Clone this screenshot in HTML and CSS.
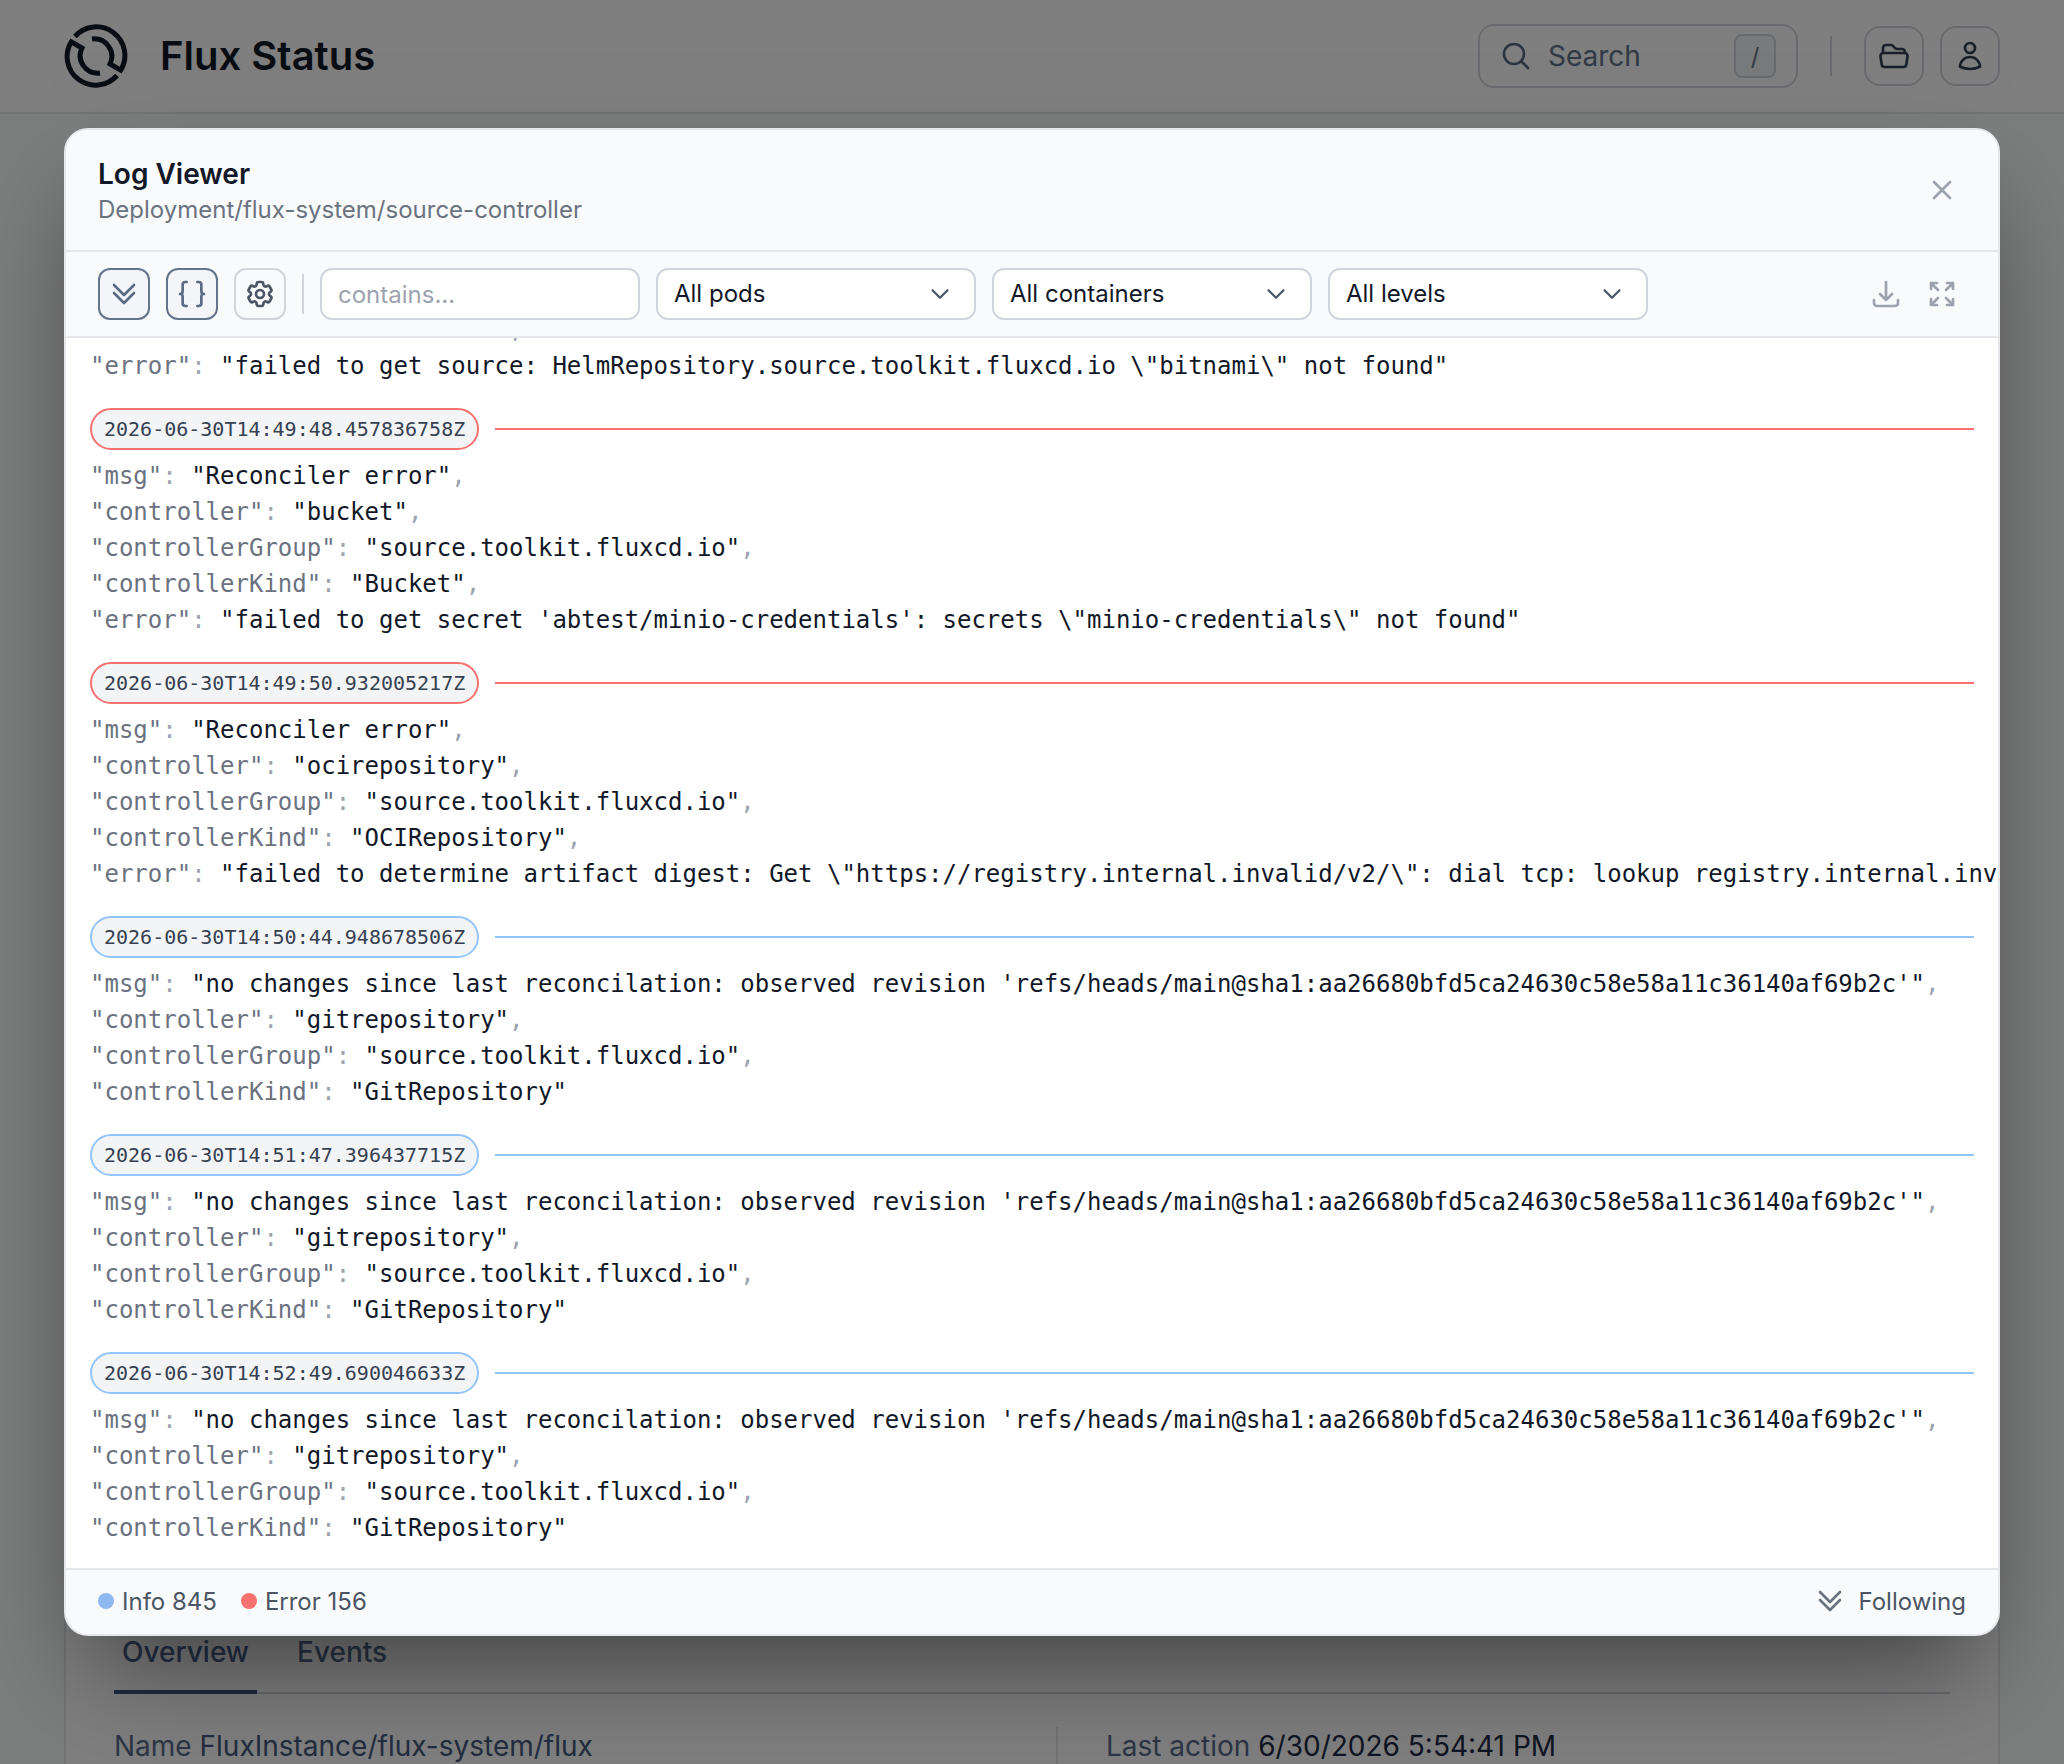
FILE: index.html
```html
<!DOCTYPE html>
<html lang="en">
<head>
<meta charset="utf-8">
<title>Flux Status</title>
<link rel="stylesheet" href="styles.css">
</head>
<body>
<header class="topbar">
  <div class="brand">
    <svg class="logo" viewBox="0 0 64 64" fill="none" stroke="currentColor" stroke-width="5" stroke-linecap="butt" stroke-linejoin="miter">
      <path d="M11 12.5A28.5 28.5 0 0 1 56.7 46.2L46 40A17.5 17.5 0 0 0 28 15"/>
      <path d="M53 51.5A28.5 28.5 0 0 1 7.3 17.8L18 24A17.5 17.5 0 0 0 36 49"/>
    </svg>
    <span class="brand-name">Flux Status</span>
  </div>
  <div class="top-actions">
    <div class="search">
      <svg class="icon32 bold" viewBox="0 0 24 24" fill="none" stroke="currentColor" stroke-width="1.5" stroke-linecap="round" stroke-linejoin="round"><path d="m21 21-5.197-5.197m0 0A7.5 7.5 0 1 0 5.196 5.196a7.5 7.5 0 0 0 10.607 10.607Z"/></svg>
      <span class="search-label">Search</span>
      <kbd class="kbd">/</kbd>
    </div>
    <span class="top-sep"></span>
    <button class="top-btn"><svg class="icon32 bold" viewBox="0 0 24 24" fill="none" stroke="currentColor" stroke-width="1.5" stroke-linecap="round" stroke-linejoin="round"><path d="M3.75 9.776c.112-.017.227-.026.344-.026h15.812c.117 0 .232.009.344.026m-16.5 0a2.25 2.25 0 0 0-1.883 2.542l.857 6a2.25 2.25 0 0 0 2.227 1.932H19.05a2.25 2.25 0 0 0 2.227-1.932l.857-6a2.25 2.25 0 0 0-1.883-2.542m-16.5 0V6A2.25 2.25 0 0 1 6 3.75h3.879a1.5 1.5 0 0 1 1.06.44l2.122 2.12a1.5 1.5 0 0 0 1.06.44H18A2.25 2.25 0 0 1 20.25 9v.776"/></svg></button>
    <button class="top-btn"><svg class="icon32 bold" viewBox="0 0 24 24" fill="none" stroke="currentColor" stroke-width="1.5" stroke-linecap="round" stroke-linejoin="round"><path d="M15.75 6a3.75 3.75 0 1 1-7.5 0 3.75 3.75 0 0 1 7.5 0ZM4.501 20.118a7.5 7.5 0 0 1 14.998 0A17.933 17.933 0 0 1 12 21.75c-2.676 0-5.216-.584-7.499-1.632Z"/></svg></button>
  </div>
</header>

<main class="page">
  <section class="card">
    <div class="card-spacer"></div>
    <nav class="tabs">
      <span class="tab tab-active">Overview</span>
      <span class="tab">Events</span>
    </nav>
    <div class="facts">
      <div class="fact"><span class="fact-key">Name</span> FluxInstance/flux-system/flux</div>
      <div class="fact fact-right"><span class="fact-key">Last action</span> <span class="fact-strong">6/30/2026 5:54:41 PM</span></div>
    </div>
  </section>
</main>

<div class="overlay">
  <div class="modal">
    <div class="modal-head">
      <div>
        <div class="modal-title">Log Viewer</div>
        <div class="modal-sub">Deployment/flux-system/source-controller</div>
      </div>
      <svg class="icon32 muted bold" viewBox="0 0 24 24" fill="none" stroke="currentColor" stroke-width="1.5" stroke-linecap="round" stroke-linejoin="round"><path d="M6 18 18 6M6 6l12 12"/></svg>
    </div>

    <div class="toolbar">
      <button class="tool tool-on"><svg class="icon32 bold" viewBox="0 0 24 24" fill="none" stroke="currentColor" stroke-width="1.5" stroke-linecap="round" stroke-linejoin="round"><path d="m4.5 5.25 7.5 7.5 7.5-7.5m-15 6 7.5 7.5 7.5-7.5"/></svg></button>
      <button class="tool tool-on"><svg class="icon32 bold" viewBox="0 0 24 24" fill="none" stroke="currentColor" stroke-width="1.5" stroke-linecap="round" stroke-linejoin="round"><path d="M8 3H7a2 2 0 0 0-2 2v5a2 2 0 0 1-2 2 2 2 0 0 1 2 2v5c0 1.1.9 2 2 2h1"/><path d="M16 21h1a2 2 0 0 0 2-2v-5c0-1.1.9-2 2-2a2 2 0 0 1-2-2V5a2 2 0 0 0-2-2h-1"/></svg></button>
      <button class="tool"><svg class="icon32 bold" viewBox="0 0 24 24" fill="none" stroke="currentColor" stroke-width="1.5" stroke-linecap="round" stroke-linejoin="round"><path d="M9.594 3.94c.09-.542.56-.94 1.11-.94h2.593c.55 0 1.02.398 1.11.94l.213 1.281c.063.374.313.686.645.87.074.04.147.083.22.127.325.196.72.257 1.075.124l1.217-.456a1.125 1.125 0 0 1 1.37.49l1.296 2.247a1.125 1.125 0 0 1-.26 1.431l-1.003.827c-.293.241-.438.613-.43.992a7.723 7.723 0 0 1 0 .255c-.008.378.137.75.43.991l1.004.827c.424.35.534.955.26 1.43l-1.298 2.247a1.125 1.125 0 0 1-1.369.491l-1.217-.456c-.355-.133-.75-.072-1.076.124a6.47 6.47 0 0 1-.22.128c-.331.183-.581.495-.644.869l-.213 1.281c-.09.543-.56.94-1.11.94h-2.594c-.55 0-1.019-.398-1.11-.94l-.213-1.281c-.062-.374-.312-.686-.644-.87a6.52 6.52 0 0 1-.22-.127c-.325-.196-.72-.257-1.076-.124l-1.217.456a1.125 1.125 0 0 1-1.369-.49l-1.297-2.247a1.125 1.125 0 0 1 .26-1.431l1.004-.827c.292-.24.437-.613.43-.991a6.932 6.932 0 0 1 0-.255c.007-.38-.138-.751-.43-.992l-1.004-.827a1.125 1.125 0 0 1-.26-1.43l1.297-2.247a1.125 1.125 0 0 1 1.37-.491l1.216.456c.356.133.751.072 1.076-.124.072-.044.146-.086.22-.128.332-.183.582-.495.644-.869l.214-1.28Z"/><path d="M15 12a3 3 0 1 1-6 0 3 3 0 0 1 6 0Z"/></svg></button>
      <span class="tool-sep"></span>
      <input class="field filter" type="text" placeholder="contains...">
      <div class="field select"><span class="select-text">All pods</span><svg class="icon24" viewBox="0 0 24 24" fill="none" stroke="currentColor" stroke-width="2.2" stroke-linecap="round" stroke-linejoin="round"><path d="m19.5 8.25-7.5 7.5-7.5-7.5"/></svg></div>
      <div class="field select"><span class="select-text">All containers</span><svg class="icon24" viewBox="0 0 24 24" fill="none" stroke="currentColor" stroke-width="2.2" stroke-linecap="round" stroke-linejoin="round"><path d="m19.5 8.25-7.5 7.5-7.5-7.5"/></svg></div>
      <div class="field select"><span class="select-text">All levels</span><svg class="icon24" viewBox="0 0 24 24" fill="none" stroke="currentColor" stroke-width="2.2" stroke-linecap="round" stroke-linejoin="round"><path d="m19.5 8.25-7.5 7.5-7.5-7.5"/></svg></div>
      <div class="tool-right">
        <svg class="icon32 muted bold" viewBox="0 0 24 24" fill="none" stroke="currentColor" stroke-width="1.5" stroke-linecap="round" stroke-linejoin="round"><path d="M3 16.5v2.25A2.25 2.25 0 0 0 5.25 21h13.5A2.25 2.25 0 0 0 21 18.75V16.5M16.5 12 12 16.5m0 0L7.5 12m4.5 4.5V3"/></svg>
        <svg class="icon32 muted bold" viewBox="0 0 24 24" fill="none" stroke="currentColor" stroke-width="1.5" stroke-linecap="round" stroke-linejoin="round"><path d="M3.75 3.75v4.5m0-4.5h4.5m-4.5 0L9 9M3.75 20.25v-4.5m0 4.5h4.5m-4.5 0L9 15M20.25 3.75h-4.5m4.5 0v4.5m0-4.5L15 9m5.25 11.25h-4.5m4.5 0v-4.5m0 4.5L15 15"/></svg>
      </div>
    </div>

    <div class="logs">
      <div class="entry">
        <div class="line"><span class="k">"controllerKind"</span><span class="p">: </span><span class="v">"HelmChart"</span><span class="p">,</span></div>
        <div class="line"><span class="k">"error"</span><span class="p">: </span><span class="v">"failed to get source: HelmRepository.source.toolkit.fluxcd.io \"bitnami\" not found"</span></div>
      </div>

      <div class="entry">
        <div class="stamp-row stamp-error"><span class="stamp">2026-06-30T14:49:48.457836758Z</span><span class="rule"></span></div>
        <div class="line"><span class="k">"msg"</span><span class="p">: </span><span class="v">"Reconciler error"</span><span class="p">,</span></div>
        <div class="line"><span class="k">"controller"</span><span class="p">: </span><span class="v">"bucket"</span><span class="p">,</span></div>
        <div class="line"><span class="k">"controllerGroup"</span><span class="p">: </span><span class="v">"source.toolkit.fluxcd.io"</span><span class="p">,</span></div>
        <div class="line"><span class="k">"controllerKind"</span><span class="p">: </span><span class="v">"Bucket"</span><span class="p">,</span></div>
        <div class="line"><span class="k">"error"</span><span class="p">: </span><span class="v">"failed to get secret 'abtest/minio-credentials': secrets \"minio-credentials\" not found"</span></div>
      </div>

      <div class="entry">
        <div class="stamp-row stamp-error"><span class="stamp">2026-06-30T14:49:50.932005217Z</span><span class="rule"></span></div>
        <div class="line"><span class="k">"msg"</span><span class="p">: </span><span class="v">"Reconciler error"</span><span class="p">,</span></div>
        <div class="line"><span class="k">"controller"</span><span class="p">: </span><span class="v">"ocirepository"</span><span class="p">,</span></div>
        <div class="line"><span class="k">"controllerGroup"</span><span class="p">: </span><span class="v">"source.toolkit.fluxcd.io"</span><span class="p">,</span></div>
        <div class="line"><span class="k">"controllerKind"</span><span class="p">: </span><span class="v">"OCIRepository"</span><span class="p">,</span></div>
        <div class="line"><span class="k">"error"</span><span class="p">: </span><span class="v">"failed to determine artifact digest: Get \"https://registry.internal.invalid/v2/\": dial tcp: lookup registry.internal.invalid: no such host"</span></div>
      </div>

      <div class="entry">
        <div class="stamp-row stamp-info"><span class="stamp">2026-06-30T14:50:44.948678506Z</span><span class="rule"></span></div>
        <div class="line"><span class="k">"msg"</span><span class="p">: </span><span class="v">"no changes since last reconcilation: observed revision 'refs/heads/main@sha1:aa26680bfd5ca24630c58e58a11c36140af69b2c'"</span><span class="p">,</span></div>
        <div class="line"><span class="k">"controller"</span><span class="p">: </span><span class="v">"gitrepository"</span><span class="p">,</span></div>
        <div class="line"><span class="k">"controllerGroup"</span><span class="p">: </span><span class="v">"source.toolkit.fluxcd.io"</span><span class="p">,</span></div>
        <div class="line"><span class="k">"controllerKind"</span><span class="p">: </span><span class="v">"GitRepository"</span></div>
      </div>

      <div class="entry">
        <div class="stamp-row stamp-info"><span class="stamp">2026-06-30T14:51:47.396437715Z</span><span class="rule"></span></div>
        <div class="line"><span class="k">"msg"</span><span class="p">: </span><span class="v">"no changes since last reconcilation: observed revision 'refs/heads/main@sha1:aa26680bfd5ca24630c58e58a11c36140af69b2c'"</span><span class="p">,</span></div>
        <div class="line"><span class="k">"controller"</span><span class="p">: </span><span class="v">"gitrepository"</span><span class="p">,</span></div>
        <div class="line"><span class="k">"controllerGroup"</span><span class="p">: </span><span class="v">"source.toolkit.fluxcd.io"</span><span class="p">,</span></div>
        <div class="line"><span class="k">"controllerKind"</span><span class="p">: </span><span class="v">"GitRepository"</span></div>
      </div>

      <div class="entry">
        <div class="stamp-row stamp-info"><span class="stamp">2026-06-30T14:52:49.690046633Z</span><span class="rule"></span></div>
        <div class="line"><span class="k">"msg"</span><span class="p">: </span><span class="v">"no changes since last reconcilation: observed revision 'refs/heads/main@sha1:aa26680bfd5ca24630c58e58a11c36140af69b2c'"</span><span class="p">,</span></div>
        <div class="line"><span class="k">"controller"</span><span class="p">: </span><span class="v">"gitrepository"</span><span class="p">,</span></div>
        <div class="line"><span class="k">"controllerGroup"</span><span class="p">: </span><span class="v">"source.toolkit.fluxcd.io"</span><span class="p">,</span></div>
        <div class="line"><span class="k">"controllerKind"</span><span class="p">: </span><span class="v">"GitRepository"</span></div>
      </div>
    </div>

    <div class="modal-foot">
      <div class="counts">
        <span class="count"><i class="dot dot-info"></i>Info 845</span>
        <span class="count"><i class="dot dot-error"></i>Error 156</span>
      </div>
      <div class="follow">
        <svg class="icon32 bold" viewBox="0 0 24 24" fill="none" stroke="currentColor" stroke-width="1.5" stroke-linecap="round" stroke-linejoin="round"><path d="m4.5 5.25 7.5 7.5 7.5-7.5m-15 6 7.5 7.5 7.5-7.5"/></svg>
        <span>Following</span>
      </div>
    </div>
  </div>
</div>
</body>
</html>
```

FILE: styles.css
```css
* { box-sizing: border-box; }
html, body { margin: 0; height: 1764px; overflow: hidden; }
body { background: #f9fafb; font-family: Inter, "Noto Sans", sans-serif; color: #111827; position: relative; }

.icon32 { width: 32px; height: 32px; flex: none; display: block; }
.icon24 { width: 24px; height: 24px; flex: none; display: block; }
.muted { color: #9ca3af; }
svg.bold { stroke-width: 2; }

.topbar { height: 114px; background: #fff; border-bottom: 2px solid #e5e7eb; padding: 0 64px; display: flex; align-items: center; justify-content: space-between; }
.brand { display: flex; align-items: center; gap: 32px; }
.logo { width: 64px; height: 64px; display: block; color: #111827; }
.brand-name { font-size: 40px; line-height: 48px; font-weight: 600; }
.top-actions { display: flex; align-items: center; }
.search { width: 320px; height: 64px; border: 2px solid #d1d5db; border-radius: 16px; display: flex; align-items: center; padding: 0 20px 0 20px; color: #5b6b85; }
.search-label { flex: 1; font-size: 28px; margin-left: 16px; color: #64748b; }
.kbd { width: 42px; height: 44px; border: 2px solid #d1d5db; border-radius: 8px; background: #f3f4f6; display: flex; align-items: center; justify-content: center; font-family: Inter, sans-serif; font-size: 24px; color: #64748b; }
.top-sep { width: 2px; height: 40px; background: #d1d5db; margin: 0 32px; }
.top-btn { width: 60px; height: 60px; border: 2px solid #d1d5db; border-radius: 16px; background: transparent; padding: 0; display: flex; align-items: center; justify-content: center; color: #334155; }
.top-btn + .top-btn { margin-left: 16px; }

.page { padding: 32px 64px 0; }
.card { background: #fff; border: 2px solid #e5e7eb; border-radius: 24px; padding: 0 48px; }
.card-spacer { height: 1484px; }
.tabs { display: flex; gap: 32px; border-bottom: 2px solid #d1d5db; }
.tab { font-size: 28px; line-height: 40px; font-weight: 500; padding: 0 8px 18px; color: #55688e; margin-bottom: -2px; border-bottom: 4px solid transparent; }
.tab-active { color: #4a6090; border-bottom-color: #3f5580; }
.facts { display: grid; grid-template-columns: 942px 1fr; padding-top: 34px; font-size: 28px; line-height: 36px; color: #475a80; }
.fact-key { color: #5b6b8c; }
.fact-right { border-left: 2px solid #e5e7eb; padding-left: 48px; height: 80px; margin-top: -1px; padding-top: 1px; }
.fact-strong { color: #1f2a44; }

.overlay { position: absolute; inset: 0; background: rgba(0, 0, 0, 0.5); padding: 128px 64px; display: flex; }
.modal { flex: 1; min-width: 0; display: flex; flex-direction: column; background: #fff; border: 2px solid #e5e7eb; border-radius: 24px; overflow: hidden; box-shadow: 0 50px 100px -24px rgba(0, 0, 0, 0.5); }
.modal-head { height: 122px; flex: none; background: #f9fafb; border-bottom: 2px solid #e5e7eb; padding: 0 40px 0 32px; display: flex; align-items: center; justify-content: space-between; }
.modal-title { font-size: 28px; line-height: 40px; font-weight: 600; }
.modal-sub { font-size: 24px; line-height: 32px; color: #6b7280; }

.toolbar { height: 86px; flex: none; background: #f9fafb; border-bottom: 2px solid #e5e7eb; padding: 0 40px 0 32px; display: flex; align-items: center; gap: 16px; }
.tool { width: 52px; height: 52px; padding: 0; border: 2px solid #d1d5db; border-radius: 12px; background: transparent; display: flex; align-items: center; justify-content: center; color: #4b5563; }
.tool-on { border-color: #64748b; background: #f3f5f9; color: #5b6b85; }
.tool-sep { width: 2px; height: 40px; background: #d1d5db; }
.field { width: 320px; height: 52px; flex: none; border: 2px solid #d1d5db; border-radius: 12px; background: #fff; font-family: Inter, sans-serif; font-size: 24px; color: #111827; padding: 0 16px; outline: none; }
.filter::placeholder { color: #9ca3af; opacity: 1; }
.select { display: flex; align-items: center; justify-content: space-between; padding-right: 22px; }
.select-text { margin-top: -2px; }
.select .icon24 { color: #4b5563; }
.tool-right { margin-left: auto; display: flex; gap: 24px; }

.logs { flex: 1; min-height: 0; overflow: hidden; display: flex; flex-direction: column; justify-content: flex-end; gap: 24px; padding: 0 24px 22px; font-family: "DejaVu Sans Mono", monospace; font-size: 24px; line-height: 36px; background: #fff; }
.entry { flex: none; }
.line { white-space: pre; }
.k { color: #6b7280; }
.p { color: #9ca3af; }
.v { color: #111827; }
.stamp-row { display: flex; align-items: center; gap: 16px; height: 42px; margin-bottom: 8px; }
.stamp { flex: none; height: 42px; border: 2px solid; border-radius: 21px; background: #f3f4f6; padding: 0 12px; font-size: 20px; line-height: 38px; color: #374151; }
.rule { flex: 1; height: 2px; }
.stamp-error .stamp { border-color: #f87171; }
.stamp-error .rule { background: #f87171; }
.stamp-info .stamp { border-color: #93c5fd; }
.stamp-info .rule { background: #93c5fd; }

.modal-foot { height: 66px; flex: none; background: #f9fafb; border-top: 2px solid #e5e7eb; padding: 0 32px 2px; display: flex; align-items: center; justify-content: space-between; font-size: 24px; color: #4b5563; }
.counts { display: flex; gap: 24px; }
.count { display: flex; align-items: center; gap: 8px; }
.dot { width: 16px; height: 16px; border-radius: 50%; display: block; }
.dot-info { background: #8db8f0; }
.dot-error { background: #f87171; }
.follow { display: flex; align-items: center; gap: 12px; color: #4b5563; }
.follow .icon32 { color: #6b7280; }
```
